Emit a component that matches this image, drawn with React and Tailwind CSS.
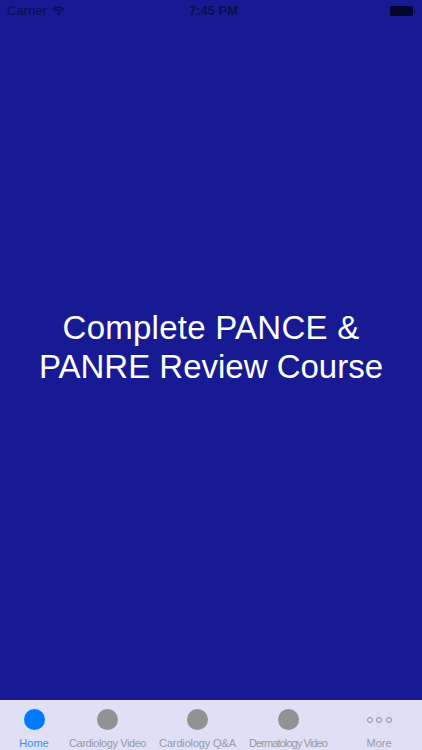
const font = { fontFamily: '"Liberation Sans", Arial, sans-serif' };

// tabs aren't evenly spaced in the screenshot, so each one has its own width
const tabs = [
  { label: 'Home', active: true, cell: 'w-[68px]', text: '' },
  { label: 'Cardiology Video', cell: 'w-[79px]', text: 'tracking-[-0.4px]' },
  { label: 'Cardiology Q&A', cell: 'w-[101px]', text: 'tracking-[-0.15px]' },
  { label: 'Dermatology Video', cell: 'w-[80px]', text: 'tracking-[-0.9px]' },
  { label: 'More', more: true, cell: 'w-[94px] pl-[8px]', text: '' },
];

function Wifi() {
  return (
    <svg width="13" height="10" viewBox="0 0 13 10" fill="none" stroke="#0b0f4d" strokeWidth="1.6" className="ml-[5px] mb-[1px]">
      <path d="M0.8 3.4C4 0.5 9 0.5 12.2 3.4" />
      <path d="M2.9 5.5C4.9 3.8 8.1 3.8 10.1 5.5" />
      <path d="M6.5 9.8L4.4 7.4C5.7 6.5 7.3 6.5 8.6 7.4Z" fill="#0b0f4d" stroke="none" />
    </svg>
  );
}

function Battery() {
  return (
    <div className="flex items-center">
      <div className="w-[23px] h-[10px] rounded-[2px] bg-[#03052e]" />
      <div className="w-[1px] h-[3px] bg-[#03052e] ml-[1px]" />
    </div>
  );
}

function MoreIcon() {
  return (
    <div className="h-[21px] flex items-center gap-[3.5px]">
      <span className="w-[6px] h-[6px] rounded-full border border-[#8e8e93]" />
      <span className="w-[6px] h-[6px] rounded-full border border-[#8e8e93]" />
      <span className="w-[6px] h-[6px] rounded-full border border-[#8e8e93]" />
    </div>
  );
}

export default function App() {
  return (
    <div className="flex flex-col w-[422px] h-[750px] bg-[#171a93] overflow-hidden" style={font}>
      <div className="relative flex items-center justify-between h-[22px] pl-[7px] pr-[7px] text-[13px] text-[#0b0f4d]">
        <div className="flex items-center">
          <span>Carrier</span>
          <Wifi />
        </div>
        <span className="absolute left-[5px] right-0 text-center font-bold">7:45 PM</span>
        <Battery />
      </div>

      <main className="flex-1 flex items-center justify-center text-white text-[33px] leading-[39px] text-center pb-[29px]">
        <p><span className="tracking-[0.25px]">Complete PANCE &</span><br />PANRE Review Course</p>
      </main>

      <nav className="h-[50px] bg-[#dfdff6] flex pt-[9px]">
        {tabs.map((t) => (
          <div key={t.label} className={`${t.cell} flex flex-col items-center`}>
            {t.more ? <MoreIcon /> : (
              <span className={`w-[21px] h-[21px] rounded-full ${t.active ? 'bg-[#007aff]' : 'bg-[#929292]'}`} />
            )}
            <span className={`mt-[7px] text-[11px] leading-[13px] whitespace-nowrap ${t.text} ${t.active ? 'text-[#3a8dfa]' : 'text-[#9a9aa4]'}`}>{t.label}</span>
          </div>
        ))}
      </nav>
    </div>
  );
}
